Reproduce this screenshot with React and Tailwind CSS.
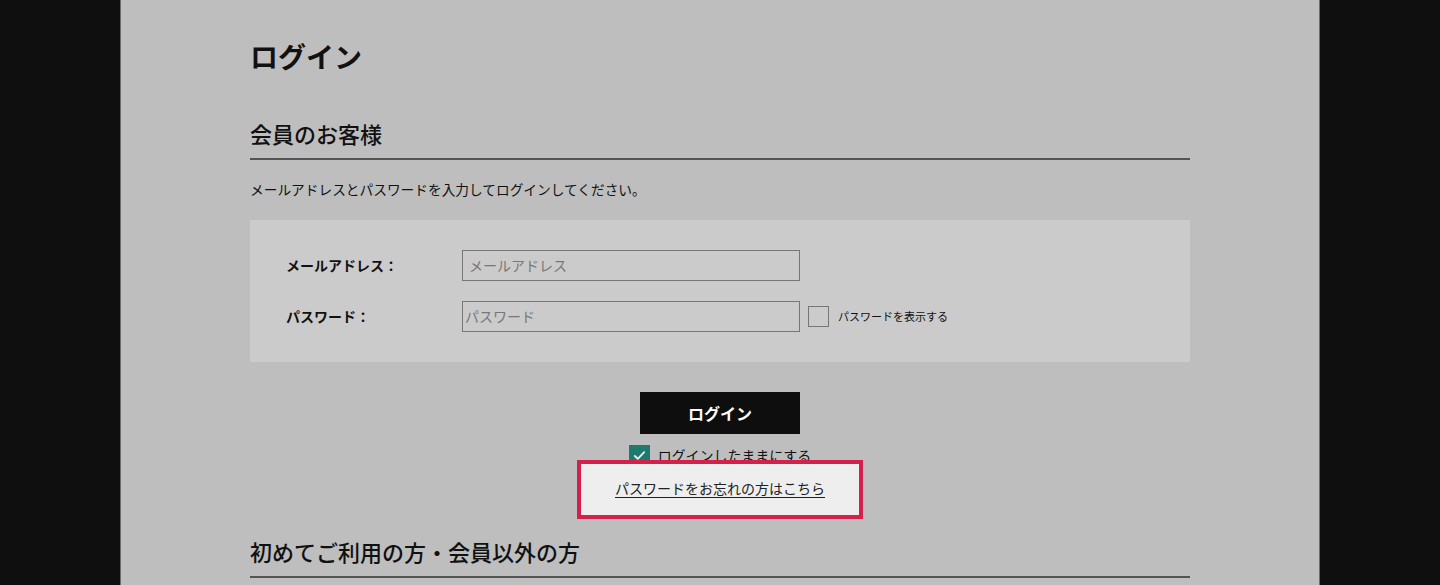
import React from "react";

const font = { fontFamily: '"Noto Sans CJK JP", "Noto Sans", sans-serif' };

export default function App() {
  return (
    <div className="min-h-[585px] h-[585px] overflow-hidden bg-[#0f0f0f] flex justify-center" style={font}>
      <div className="w-[1200px] bg-[#bebebe] border-x border-[#6a6a6a] px-[129px] pt-[36px] text-[#111]">
        <h1 className="text-[28px] font-bold leading-[40px] h-[40px]">ログイン</h1>

        <h2 className="mt-[41px] text-[22px] font-medium leading-[32px] h-[32px]">会員のお客様</h2>
        <div className="mt-[9px] h-[2px] bg-[#555]" />

        <p className="mt-[19px] text-[13.7px] leading-[20px] h-[20px]">
          メールアドレスとパスワードを入力してログインしてください。
        </p>

        <div className="mt-[21px] bg-[#cbcbcb] px-[36px] pt-[30px] pb-[30px] flex flex-col gap-[20px]">
          <div className="flex items-center">
            <label className="w-[176px] text-[14px] font-bold">メールアドレス：</label>
            <div className="w-[338px] h-[31px] border border-[#767676] flex items-center px-[6px] text-[14px] text-[#777]">
              メールアドレス
            </div>
          </div>
          <div className="flex items-center">
            <label className="w-[176px] text-[14px] font-bold">パスワード：</label>
            <div className="w-[338px] h-[31px] border border-[#767676] flex items-center px-[2px] text-[14px] text-[#777]">
              パスワード
            </div>
            <div className="ml-[8px] w-[21px] h-[21px] border border-[#767676]" />
            <span className="ml-[9px] text-[11px]">パスワードを表示する</span>
          </div>
        </div>

        <div className="mt-[30px] flex justify-center">
          <button className="w-[160px] h-[42px] bg-[#0e0e0e] text-white text-[16px] font-bold">
            ログイン
          </button>
        </div>

        <div className="mt-[11px] flex justify-center items-center">
          <div className="w-[21px] h-[21px] bg-[#1e7a6d] flex items-center justify-center">
            <svg width="15" height="15" viewBox="0 0 16 16" fill="none">
              <path d="M3 8.5l3.2 3L13 4.5" stroke="#e8f2f0" strokeWidth="2" strokeLinecap="round" strokeLinejoin="round" />
            </svg>
          </div>
          <span className="ml-[8px] text-[14px] leading-[21px]">ログインしたままにする</span>
        </div>

        <div className="mt-[11px] flex justify-center">
          <div className="relative">
            <div className="absolute -left-[38px] -right-[38px] -top-[17px] -bottom-[20px] bg-[#eeeeee] border-[4px] border-[#d4204a]" />
            <a className="relative block text-[14px] leading-[22px] underline underline-offset-[3px] text-[#222]">
              パスワードをお忘れの方はこちら
            </a>
          </div>
        </div>

        <h2 className="mt-[36px] text-[22px] font-medium leading-[32px] h-[32px]">初めてご利用の方・会員以外の方</h2>
        <div className="mt-[9px] h-[2px] bg-[#555]" />
      </div>
    </div>
  );
}
